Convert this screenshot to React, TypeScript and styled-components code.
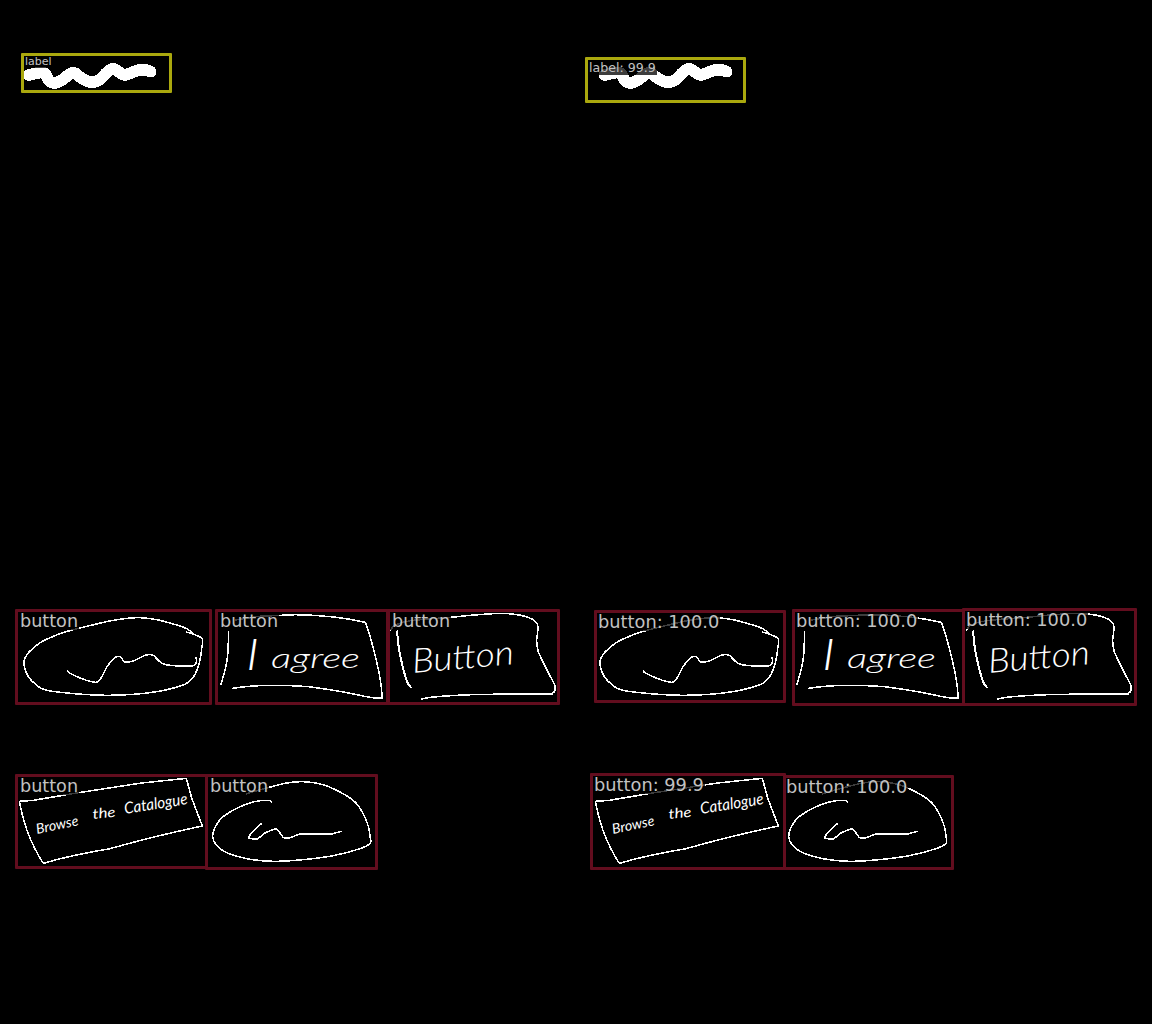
import React from "react";
import styled, { createGlobalStyle } from "styled-components";

const GlobalStyle = createGlobalStyle`
  html, body { margin: 0; background: #000; }
`;

const Comparison = styled.main`
  display: grid;
  grid-template-columns: 576px 576px;
  width: 1152px;
  height: 1024px;
  background: #000;
`;

const Panel = styled.section`
  position: relative;
  height: 1024px;
`;

const Drawing = styled.svg`
  display: block;
  width: 576px;
  height: 1024px;
  fill: none;
  stroke: #fff;
  stroke-width: 4.6;
  stroke-linecap: round;
  stroke-linejoin: round;
  shape-rendering: crispEdges;
`;

const Handwriting = styled.text<{ $size: number; $weight?: number }>`
  font-family: Lato, "Open Sans", sans-serif;
  font-style: italic;
  font-weight: ${(p) => p.$weight ?? 300};
  font-size: ${(p) => p.$size}px;
  fill: #fff;
  stroke: none;
`;

type Kind = "label" | "button";
const tones: Record<Kind, string> = { label: "#aaa80e", button: "#620d1e" };

const Detection = styled.div<{ $kind: Kind; $x: number; $y: number; $w: number; $h: number }>`
  position: absolute;
  box-sizing: border-box;
  left: ${(p) => p.$x}px;
  top: ${(p) => p.$y}px;
  width: ${(p) => p.$w}px;
  height: ${(p) => p.$h}px;
  display: flex;
  align-items: flex-start;
  border: 3px solid ${(p) => tones[p.$kind]};
  border-radius: 1px;
`;

const Tag = styled.span<{ $size: number; $line: number; $pad: number }>`
  padding: 0 1px 0 ${(p) => p.$pad}px;
  font: ${(p) => p.$size}px/${(p) => p.$line}px "DejaVu Sans", sans-serif;
  white-space: nowrap;
  color: #c2c2c2;
  background: rgba(0, 0, 0, 0.76);
`;

interface Item {
  kind: Kind;
  text: string;
  box: [number, number, number, number];
  size: number;
  line: number;
  pad: number;
}

const truth: Item[] = [
  { kind: "label", text: "label", box: [21, 53, 151, 40], size: 11, line: 12, pad: 1 },
  { kind: "button", text: "button", box: [15, 609, 197, 96], size: 17.6, line: 18, pad: 2 },
  { kind: "button", text: "button", box: [215, 609, 174, 96], size: 17.6, line: 18, pad: 2 },
  { kind: "button", text: "button", box: [387, 609, 173, 96], size: 17.6, line: 18, pad: 2 },
  { kind: "button", text: "button", box: [15, 774, 193, 95], size: 17.6, line: 18, pad: 2 },
  { kind: "button", text: "button", box: [205, 774, 173, 96], size: 17.6, line: 18, pad: 2 },
];

const predicted: Item[] = [
  { kind: "label", text: "label: 99.9", box: [9, 57, 161, 46], size: 12.6, line: 15, pad: 1 },
  { kind: "button", text: "button: 100.0", box: [18, 610, 192, 93], size: 17.8, line: 18, pad: 1 },
  { kind: "button", text: "button: 100.0", box: [216, 609, 173, 97], size: 17.8, line: 18, pad: 1 },
  { kind: "button", text: "button: 100.0", box: [386, 608, 175, 98], size: 17.8, line: 18, pad: 1 },
  { kind: "button", text: "button: 99.9", box: [14, 773, 196, 97], size: 17.8, line: 18, pad: 1 },
  { kind: "button", text: "button: 100.0", box: [207, 775, 171, 95], size: 17.8, line: 18, pad: 0 },
];

/** Smooth pen line through a flat list of x, y pairs. */
function penLine(flat: number[]): string {
  const pts: [number, number][] = [];
  for (let i = 0; i < flat.length; i += 2) pts.push([flat[i], flat[i + 1]]);
  let d = `M${pts[0][0]} ${pts[0][1]}`;
  for (let i = 0; i < pts.length - 1; i++) {
    const a = pts[Math.max(0, i - 1)];
    const b = pts[i];
    const c = pts[i + 1];
    const e = pts[Math.min(pts.length - 1, i + 2)];
    d += ` C${b[0] + (c[0] - a[0]) / 6} ${b[1] + (c[1] - a[1]) / 6} ${c[0] - (e[0] - b[0]) / 6} ${c[1] - (e[1] - b[1]) / 6} ${c[0]} ${c[1]}`;
  }
  return d;
}

const Pen = ({ points, width }: { points: number[]; width?: number }) => (
  <path d={penLine(points)} strokeWidth={width} />
);

const third = 1 / 3;

function Sketch() {
  return (
    <Drawing viewBox="0 0 576 1024">
      <g transform={`translate(10 45) scale(${third})`}>
        <Pen
          width={35}
          points={[56, 90, 82, 84, 104, 85, 117, 106, 133, 114, 155, 106, 175, 90, 192, 83, 208, 95, 228, 107, 249, 112, 270, 103, 290, 83, 309, 71, 326, 80, 343, 90, 362, 84, 388, 75, 408, 75, 422, 80]}
        />
      </g>
      <g transform={`translate(10 604) scale(${third})`}>
        <Pen points={[529, 84, 552, 91, 572, 100, 578, 108, 575, 135, 570, 168, 562, 195, 550, 220, 530, 238, 495, 251, 440, 263, 370, 271, 290, 274, 205, 270, 110, 259, 78, 242, 55, 218, 44, 192, 42, 172, 52, 150, 70, 132, 95, 113, 130, 97, 165, 84, 235, 66, 310, 49, 380, 41, 440, 47, 500, 63, 532, 75, 548, 88]} />
        <Pen points={[173, 200, 178, 207, 215, 224, 245, 233, 262, 234, 275, 219, 290, 190, 306, 169, 320, 158, 332, 159, 345, 174, 372, 170, 400, 156, 415, 152, 430, 154, 442, 166, 458, 179, 490, 185, 545, 186, 556, 180, 560, 170, 557, 160]} />
      </g>
      <g transform={`translate(212 604) scale(${third})`}>
        <path d="M70 48 L140 37 L250 32 Q370 34 460 55 L472 90 Q510 220 510 283 Q480 283 440 273 Q380 260 290 248 Q150 238 62 253" />
        <Pen points={[49, 84, 48, 145, 41, 190, 27, 240]} />
      </g>
      <g shapeRendering="auto">
        <Handwriting $size={43} x="246" y="670" textLength="13" lengthAdjust="spacingAndGlyphs">I</Handwriting>
        <Handwriting $size={27} x="271" y="668" textLength="89" lengthAdjust="spacingAndGlyphs">agree</Handwriting>
      </g>
      <g transform={`translate(384 604) scale(${third})`}>
        <Pen points={[20, 78, 34, 63, 80, 50, 200, 40, 260, 34, 330, 29, 385, 30, 430, 39, 455, 53, 462, 70, 458, 110, 462, 140, 475, 170, 495, 210, 512, 242, 513, 258, 505, 268, 485, 270, 300, 271, 200, 275, 140, 280, 113, 285]} />
        <Pen width={6} points={[40, 82, 42, 115, 52, 170, 68, 230, 80, 250]} />
      </g>
      <Handwriting
        $size={34}
        $weight={300}
        transform="translate(413 673) rotate(-5)"
        textLength="102"
        lengthAdjust="spacingAndGlyphs"
      >
        Button
      </Handwriting>
      <g transform={`translate(10 768) scale(${third})`}>
        <path d="M28 100 Q45 99 70 97 L200 75 L395 45 L529 31 L545 90 L577 174 Q430 205 300 242 Q180 262 100 286 Q70 240 50 185 Q35 140 28 100" />
      </g>
      <Handwriting $size={14} $weight={400} transform="translate(37 834) rotate(-12)" textLength="43" lengthAdjust="spacingAndGlyphs">Browse</Handwriting>
      <Handwriting $size={14} $weight={400} transform="translate(93 819) rotate(-6)" textLength="23" lengthAdjust="spacingAndGlyphs">the</Handwriting>
      <Handwriting $size={16} $weight={400} transform="translate(125 814) rotate(-9)" textLength="64" lengthAdjust="spacingAndGlyphs">Catalogue</Handwriting>
      <g transform={`translate(200 768) scale(${third})`}>
        <Pen points={[140, 78, 160, 71, 208, 58, 260, 45, 310, 41, 365, 49, 420, 72, 465, 102, 490, 138, 505, 175, 511, 210, 510, 226, 480, 242, 400, 263, 310, 275, 220, 280, 140, 272, 80, 254, 50, 232, 38, 207, 44, 180, 65, 150, 110, 121, 160, 102, 205, 97, 214, 103]} />
        <path d="M185 166 L155 195 Q146 205 146 211 L172 214 Q190 198 200 192 L228 182 Q236 188 250 209 L265 211 L300 198 L395 198 L424 190" />
      </g>
    </Drawing>
  );
}

function AnnotatedPanel({ items }: { items: Item[] }) {
  return (
    <Panel>
      <Sketch />
      {items.map(({ kind, text, box: [x, y, w, h], size, line, pad }) => (
        <Detection key={`${x}-${y}`} $kind={kind} $x={x} $y={y} $w={w} $h={h}>
          <Tag $size={size} $line={line} $pad={pad}>{text}</Tag>
        </Detection>
      ))}
    </Panel>
  );
}

export default function App() {
  return (
    <>
      <GlobalStyle />
      <Comparison>
        <AnnotatedPanel items={truth} />
        <AnnotatedPanel items={predicted} />
      </Comparison>
    </>
  );
}
